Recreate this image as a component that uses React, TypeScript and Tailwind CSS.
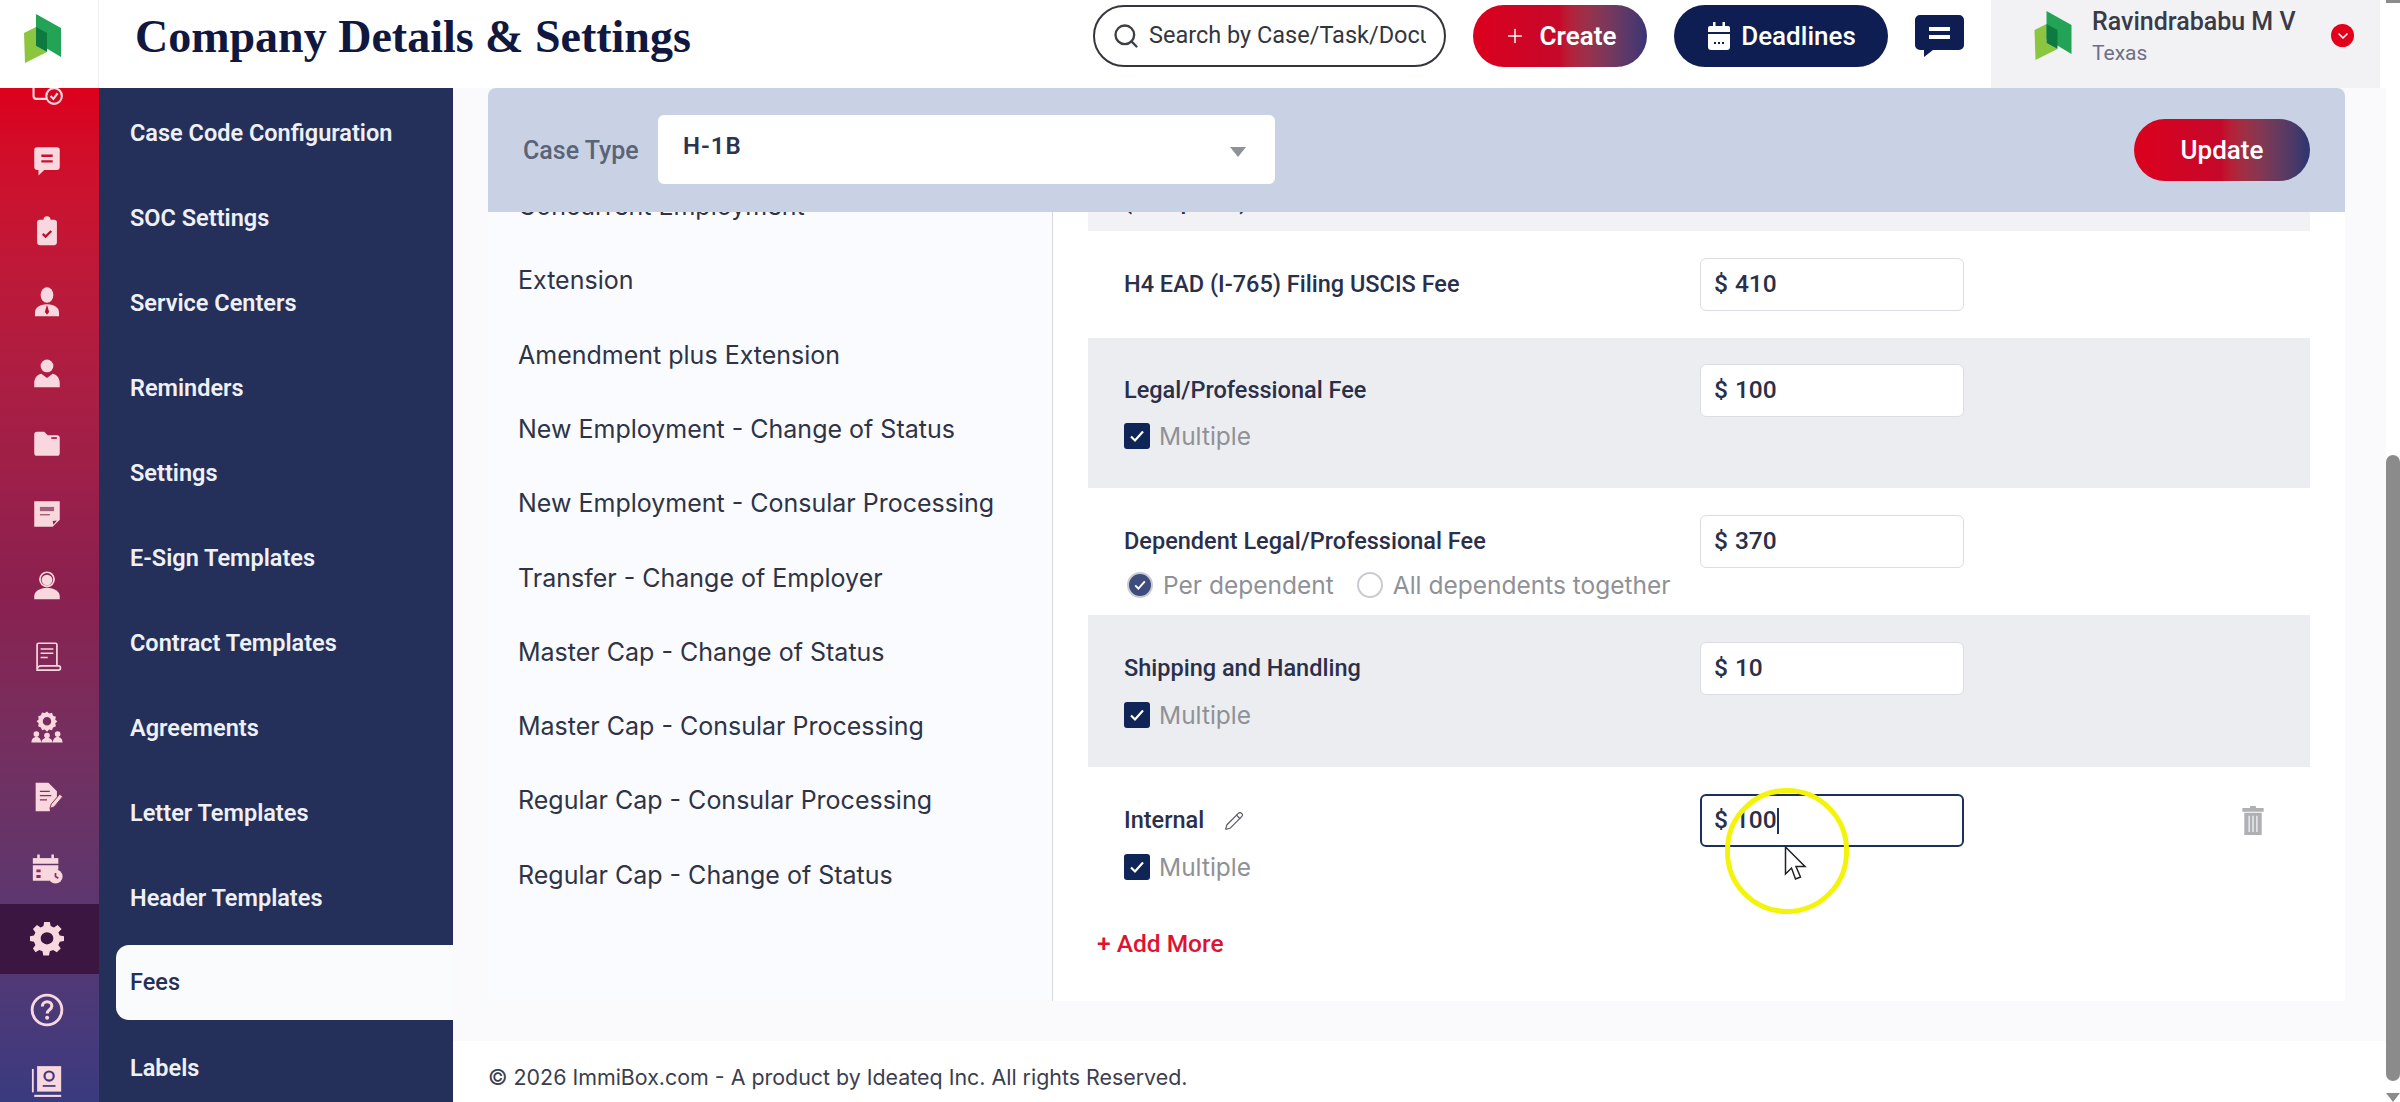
import React from "react";
import { Search, Plus, Pencil, ChevronDown } from "lucide-react";

const LogoMark = ({ className }: { className: string }) => (
  <svg viewBox="0 0 37 49" className={className}>
    <polygon points="0,19 12,13 12,32 23,38 1,49" fill="#8cc63f" />
    <polygon points="12,0 37,14 37,43 12,28" fill="#22a355" />
    <polygon points="12,13 23,19 23,38 12,32" fill="#0f7a40" />
  </svg>
);

const c = "#f8d7de";
const I = ({ children }: { children: React.ReactNode }) => (
  <svg viewBox="0 0 24 24" className="w-[34px] h-[34px]" fill={c}>{children}</svg>
);
const railIcons: React.ReactNode[] = [
  <I><rect x="2.5" y="2" width="16" height="17" rx="2" fill="none" stroke={c} strokeWidth="1.5" /><circle cx="7" cy="6" r="1" /><circle cx="17" cy="17" r="5.5" fill="#d4051f" stroke={c} strokeWidth="1.5" /><path d="M14.5 17l2 2 3-4" fill="none" stroke={c} strokeWidth="1.5" /></I>,
  <I><path d="M5 3h14a2 2 0 0 1 2 2v12a2 2 0 0 1-2 2h-9l-4 4v-4H5a2 2 0 0 1-2-2V5a2 2 0 0 1 2-2z" /><path d="M8 9h8M8 13h8" stroke="#c8102e" strokeWidth="1.6" /></I>,
  <I><path d="M7 4h2.5a2.5 2.5 0 0 1 5 0H17a2 2 0 0 1 2 2v14a2 2 0 0 1-2 2H7a2 2 0 0 1-2-2V6a2 2 0 0 1 2-2z" /><path d="M9 14l2 2 4-4" fill="none" stroke="#b8102e" strokeWidth="1.6" /></I>,
  <I><ellipse cx="12" cy="7" rx="4.5" ry="5.5" /><path d="M3.5 22v-2.5c0-3.5 3-6 8.5-6s8.5 2.500 8.500 6V22z" /><path d="M12 14l-1.500 5 1.500 2 1.500-2z" fill="#b3122f" /></I>,
  <I><circle cx="12" cy="7" r="4.500" /><path d="M3 22v-3c0-4 3-6.500 5-6.500l4 3 4-3c2 0 5 2.500 5 6.500v3z" /></I>,
  <I><path d="M3 6a2 2 0 0 1 2-2h5l2.500 2.500H19a2 2 0 0 1 2 2V19a2 2 0 0 1-2 2H5a2 2 0 0 1-2-2z" /><path d="M15 8.500h4" stroke="#a81c40" strokeWidth="1.200" /></I>,
  <I><path d="M3 3h18v13l-5 5H3z" /><path d="M7 7h10v3H7z" fill="#a0607a" /><path d="M7 12.500h7" stroke="#a0607a" strokeWidth="1" /><path d="M16 17l3-.5-2.500 3z" fill="#9a1e48" /></I>,
  <I><circle cx="12" cy="8" r="5" fill="none" stroke={c} strokeWidth="1.200" /><circle cx="12" cy="8.500" r="3.800" /><path d="M3 22v-2c0-3.500 4-6 9-6s9 2.500 9 6v2z" /></I>,
  <I><path d="M5 21V4a1 1 0 0 1 1-1h12a1 1 0 0 1 1 1v15" fill="none" stroke={c} strokeWidth="1.200" /><path d="M7.500 7h9M7.500 10h9M7.500 13h5" stroke={c} strokeWidth="1" /><path d="M5 22h15a1.500 1.500 0 0 0 0-3H8c-2 0-3 1-3 3z" fill="none" stroke={c} strokeWidth="1.200" /></I>,
  <I><path fillRule="evenodd" d="M12 1l1.500 1.500 2-.5.8 2 2 .8-.5 2L19.300 8l-1.500 1.500.5 2-2 .8-.8 2-2-.5L12 15.300l-1.500-1.500-2 .5-.8-2-2-.8.5-2L4.700 8l1.500-1.500-.5-2 2-.8.8-2 2 .5zM12 5a3 3 0 1 0 0 6 3 3 0 0 0 0-6z" /><circle cx="4.500" cy="17" r="2" /><circle cx="12" cy="18" r="2" /><circle cx="19.500" cy="17" r="2" /><path d="M1 23c0-2.500 1.500-4 3.500-4s3 1 3.500 4zM8 23c.3-2.500 2-3.500 4-3.500s3.700 1 4 3.500zM16 23c.5-3 1.500-4 3.500-4s3.500 1.500 3.500 4z" /></I>,
  <I><path d="M4 2h9l6 6v6l-5 6v2H4z" /><path d="M7 8h7M7 11h8M7 14h5" stroke="#8e2a58" strokeWidth="1" /><path d="M14 20l1-3 6-7 2 1.800-6 7.200z" stroke="#8e2a58" strokeWidth=".7" /></I>,
  <I><path d="M2 5h18v4H2z" /><path d="M6 2.500v3M16 2.500v3" stroke={c} strokeWidth="1.800" /><path d="M2 10h18v3a7 7 0 0 0-6 8H2z" /><path d="M4.500 13h3v2h-3zM4.500 17h3v2h-3z" fill="#8a2d5c" /><circle cx="18" cy="18" r="5" /><path d="M18 15.500V18l2 1.200" fill="none" stroke="#8a2d5c" strokeWidth="1.200" /></I>,
  <I><path fillRule="evenodd" d="M10 1h4l.6 3 2.300 1 2.600-1.700 2.800 2.800L20 8.700l1 2.300 3 .6v3.400l-3 .6-1 2.300 1.700 2.600-2.800 2.800-2.600-1.700-2.300 1-.6 3h-4l-.6-3-2.300-1-2.600 1.700L2.100 20.500l1.700-2.600-1-2.300-3-.6v-3.400l3-.6 1-2.300L2.100 6.100l2.800-2.800L7.500 5l2-1zM12 8.500a4.500 4.500 0 1 0 0 9 4.500 4.500 0 0 0 0-9z" transform="translate(0 -1) scale(1 .96)" /></I>,
  <I><circle cx="12" cy="12" r="10.500" fill="none" stroke={c} strokeWidth="2" /><path d="M8.700 9.500c0-2 1.500-3.300 3.400-3.300s3.300 1.200 3.300 3c0 2.600-3.300 2.600-3.300 5.300" fill="none" stroke={c} strokeWidth="2.200" /><circle cx="12.100" cy="17.500" r="1.400" /></I>,
  <I><path d="M2 20V3.500" stroke={c} strokeWidth="1.300" /><path d="M5 1.500h17v18H5z" /><circle cx="13.500" cy="8.500" r="4" fill="#3f3878" /><circle cx="13.500" cy="8.500" r="2.500" /><path d="M9 15.500h9" stroke="#3f3878" strokeWidth="1.200" /><path d="M3 22.500h19" stroke={c} strokeWidth="1.500" /></I>,
];

const sideItems = ["Case Code Configuration", "SOC Settings", "Service Centers", "Reminders", "Settings", "E-Sign Templates", "Contract Templates", "Agreements", "Letter Templates", "Header Templates", "Fees", "Labels"];
const caseList = ["Extension", "Amendment plus Extension", "New Employment - Change of Status", "New Employment - Consular Processing", "Transfer - Change of Employer", "Master Cap - Change of Status", "Master Cap - Consular Processing", "Regular Cap - Consular Processing", "Regular Cap - Change of Status"];

const Checkbox = () => (
  <span className="w-[26px] h-[26px] rounded-[3px] bg-[#0f2557] flex items-center justify-center">
    <svg viewBox="0 0 20 20" className="w-[20px] h-[20px]"><path d="M4 10.500l4 4 8-9" fill="none" stroke="#fff" strokeWidth="2.200" /></svg>
  </span>
);
const Multiple = ({ mt }: { mt: string }) => (
  <div className={`flex items-center gap-[9px] h-[32px] ${mt}`}>
    <Checkbox />
    <span className="text-[24.500px] text-[#909196]">Multiple</span>
  </div>
);
const Amount = ({ v, focus }: { v: string; focus?: boolean }) => (
  <div className={`w-[264px] h-[53px] shrink-0 rounded-[6px] bg-white flex items-center text-[24.500px] font-medium text-[#2a2f4a] font-[Roboto,sans-serif] ${focus ? "border-2 border-[#1d2f5b] px-[12px]" : "border border-[#dcdde2] px-[13px]"}`}>
    <span>$</span>
    <span className="ml-[7px]">{v}</span>
    {focus && <span className="w-[2px] h-[26px] bg-[#1d2f5b]" />}
  </div>
);
const Row = ({ label, v, gray, children, h, focus, extra, pt }: { label: React.ReactNode; v: string; gray?: boolean; children?: React.ReactNode; h: string; focus?: boolean; extra?: React.ReactNode; pt: string }) => (
  <div className={`flex px-[36px] ${pt} ${h} ${gray ? "bg-[#ecedf0]" : ""}`}>
    <div className="w-[576px] shrink-0">
      <div className="h-[53px] flex items-center text-[23.500px] font-medium text-[#2a2f4a] font-[Roboto,sans-serif]">{label}</div>
      {children}
    </div>
    <Amount v={v} focus={focus} />
    {extra}
  </div>
);

export default function App() {
  return (
    <div className="w-[2400px] h-[1102px] flex overflow-hidden bg-white font-[Inter,sans-serif]">
      <div className="w-[2386px] flex flex-col">
        <header className="h-[88px] shrink-0 flex items-start bg-white">
          <div className="w-[99px] h-full border-r border-[#eeeeee] flex items-start justify-center pr-[14px] pt-[14px]">
            <LogoMark className="w-[37px] h-[49px]" />
          </div>
          <h1 className="ml-[36px] mt-[14px] text-[46px] leading-[46px] font-bold text-[#10183f] font-['Liberation_Serif',serif]">Company Details &amp; Settings</h1>
          <div className="ml-auto flex items-start gap-[27px] h-full">
            <div className="w-[353px] h-[62px] mt-[5px] rounded-full border-2 border-[#33363d] flex items-center pl-[17px] pr-[18px] gap-[9px]">
              <Search size={28} className="text-[#3d3f46] shrink-0" strokeWidth={2} />
              <div className="overflow-hidden whitespace-nowrap text-[23.500px] text-[#33363d] font-[Roboto,sans-serif]">Search by Case/Task/Document</div>
            </div>
            <div className="w-[174px] h-[62px] mt-[5px] rounded-full bg-linear-to-r from-[#dc001c] via-[#c5082a] to-[#3a3475] flex items-center justify-center gap-[14px] text-white text-[26px] font-semibold font-[Roboto,sans-serif]">
              <Plus size={22} strokeWidth={1.6} />
              <span>Create</span>
            </div>
            <div className="w-[214px] h-[62px] mt-[5px] rounded-full bg-[#0e1d52] flex items-center justify-center gap-[9px] text-white text-[26px] font-medium font-[Roboto,sans-serif]">
              <svg viewBox="0 0 24 30" className="w-[26px] h-[30px]"><path d="M6 1h2.500v4H15.500V1H18v4h3a2 2 0 0 1 2 2v4H1V7a2 2 0 0 1 2-2h3zM1 13h22v13a3 3 0 0 1-3 3H4a3 3 0 0 1-3-3z" fill="#fff" /><path d="M7 22h2M11 22h2M15 22h2" stroke="#0e1d52" strokeWidth="1.800" /></svg>
              <span>Deadlines</span>
            </div>
            <svg viewBox="0 0 49 42" className="w-[49px] h-[42px] mt-[15px]"><path d="M5 0h39a5 5 0 0 1 5 5v25a5 5 0 0 1-5 5H18l-9 7v-7H5a5 5 0 0 1-5-5V5a5 5 0 0 1 5-5z" fill="#0e1d52" /><path d="M14 12h21v4H14zM14 20h21v4H14z" fill="#fff" /></svg>
            <div className="w-[389px] h-full bg-[#f2f2f4] flex items-start pl-[42px] relative mr-[6px]">
              <LogoMark className="w-[40px] h-[49px] mr-[19px] mt-[11px]" />
              <div className="flex flex-col mt-[7px] font-[Roboto,sans-serif]">
                <span className="text-[25px] leading-[30px] font-medium text-[#3a3a48]">Ravindrababu M V</span>
                <span className="text-[21px] leading-[32px] text-[#6e6e88]">Texas</span>
              </div>
              <span className="absolute left-[340px] top-[24px] w-[23px] h-[23px] rounded-full bg-[#e3001b] flex items-center justify-center text-white"><ChevronDown size={16} strokeWidth={2.500} /></span>
            </div>
          </div>
        </header>

        <div className="flex flex-1 min-h-0">
          <nav className="w-[99px] shrink-0 bg-linear-to-b from-[#dc001c] via-[#8a2050] to-[#3a3a80] overflow-hidden flex flex-col items-stretch">
            {railIcons.map((ic, i) => (
              <div key={i} className={`h-[70.800px] shrink-0 flex items-center justify-center pr-[6px] ${i === 0 ? "-mt-[34px]" : ""} ${i === 12 ? "bg-[#3a1640]" : ""}`}>{ic}</div>
            ))}
          </nav>

          <aside className="w-[354px] shrink-0 bg-[#25305a] pt-[3px] overflow-hidden font-[Roboto,sans-serif] text-[23.500px]">
            {sideItems.map((s) => (
              s === "Fees"
                ? <div key={s} className="ml-[17px] h-[75px] mt-[4px] mb-[6px] flex items-center pl-[14px] bg-[#fafbfd] rounded-l-[13px] text-[#25305a] font-medium">{s}</div>
                : <div key={s} className="h-[85px] flex items-center pl-[31px] text-[#eef0f6] font-semibold">{s}</div>
            ))}
          </aside>

          <main className="flex-1 min-w-0 bg-[#fafafc] flex flex-col pl-[35px] pr-[41px]">
            <div className="h-[124px] shrink-0 bg-[#c9d2e4] rounded-t-[8px] flex items-center pl-[35px] pr-[35px] relative z-10">
              <span className="text-[25px] font-medium text-[#5a6478] font-[Roboto,sans-serif] w-[135px] mt-[2px]">Case Type</span>
              <div className="w-[617px] h-[69px] bg-white rounded-[6px] flex items-center pl-[25px] pr-[29px] -mt-[2px] text-[24px] font-semibold tracking-[1px] text-[#2c3350] font-[Roboto,sans-serif]">
                <span className="-mt-[6px]">H-1B</span>
                <span className="ml-auto w-0 h-0 border-x-[8px] border-x-transparent border-t-[10px] border-t-[#8f9297] mt-[6px]" />
              </div>
              <div className="ml-auto w-[176px] h-[62px] rounded-full bg-linear-to-r from-[#dc001c] via-[#c5082a] to-[#2a3570] flex items-center justify-center text-white text-[26px] font-medium font-[Roboto,sans-serif]">Update</div>
            </div>

            <div className="h-[789px] shrink-0 flex">
              <div className="w-[565px] shrink-0 bg-[#f9fbfe] border-r border-[#d8d9dd] pl-[30px] overflow-hidden text-[25px] text-[#2f3346]">
                <div className="h-[32px] -mt-[21px] flex items-center">Concurrent Employment</div>
                {caseList.map((t, i) => (
                  <div key={t} className={`h-[74.300px] flex items-center ${i === 0 ? "mt-[21px]" : ""}`}>{t}</div>
                ))}
              </div>
              <div className="flex-1 bg-white pl-[35px] pr-[35px] overflow-hidden">
                <div className="h-[19px] bg-[#f2f2f4] pl-[36px] overflow-hidden text-[23.500px] font-medium text-[#2a2f4a] font-[Roboto,sans-serif]">
                  <div className="h-[32px] -mt-[26px] flex items-center">(if required)</div>
                </div>
                <Row label="H4 EAD (I-765) Filing USCIS Fee" v="410" h="h-[107px]" pt="pt-[27px]" />
                <Row label="Legal/Professional Fee" v="100" gray h="h-[150px]" pt="pt-[26px]"><Multiple mt="mt-[3px]" /></Row>
                <Row label="Dependent Legal/Professional Fee" v="370" h="h-[127px]" pt="pt-[27px]">
                  <div className="flex items-center h-[32px] mt-[1px] text-[24.500px] text-[#909196] whitespace-nowrap">
                    <span className="w-[26px] h-[26px] ml-[3px] rounded-full bg-[#3f4d7c] border-2 border-[#c9cbd2] flex items-center justify-center">
                      <svg viewBox="0 0 20 20" className="w-[16px] h-[16px]"><path d="M4 10.500l4 4 8-9" fill="none" stroke="#fff" strokeWidth="2.400" /></svg>
                    </span>
                    <span className="ml-[10px]">Per dependent</span>
                    <span className="w-[26px] h-[26px] ml-[23px] rounded-full border-2 border-[#c9cbd2]" />
                    <span className="ml-[10px]">All dependents together</span>
                  </div>
                </Row>
                <Row label="Shipping and Handling" v="10" gray h="h-[152px]" pt="pt-[27px]"><Multiple mt="mt-[4px]" /></Row>
                <Row
                  label={<span className="flex items-center gap-[20px]">Internal <Pencil size={20} strokeWidth={1.400} className="text-[#55575f]" /></span>}
                  v="100"
                  focus
                  h="h-[154px]"
                  pt="pt-[27px]"
                  extra={
                    <svg viewBox="0 0 22 30" className="w-[22px] h-[29px] ml-[278px] mt-[12px]"><path d="M8 0h6v2h8v4H0V2h8z M2 7h18v23H2z" fill="#aeb0b4" /><path d="M7 10v17M11 10v17M15 10v17" stroke="#f5f5f6" strokeWidth="1.300" /></svg>
                  }
                ><Multiple mt="mt-[4px]" /></Row>
                <div className="h-[46px] flex items-center pl-[9px] text-[24.500px] font-medium text-[#e0132f] font-[Roboto,sans-serif]">+ Add More</div>
              </div>
            </div>

            <div className="flex-1 -ml-[35px] -mr-[41px] relative">
              <div className="h-[40px] bg-[#fafafc]" />
              <div className="h-[61px] bg-white pl-[35px] pt-[20px] text-[21.400px] text-[#3a3e4e]">© 2026 ImmiBox.com - A product by Ideateq Inc. All rights Reserved.</div>
            </div>
          </main>
        </div>
      </div>

      <div className="w-[14px] relative bg-white">
        <div className="absolute left-0 right-0 top-[455px] h-[626px] bg-[#8b8b8b] rounded-t-[7px] rounded-b-[7px]" />
        <div className="absolute left-0 top-0 w-[14px] h-[3px] bg-[#8b8b8b]" />
        <div className="absolute left-0 bottom-0 w-0 h-0 border-x-[7px] border-x-transparent border-t-[9px] border-t-[#8b8b8b]" />
      </div>

      <div className="absolute left-[1725px] top-[788px] w-[124px] h-[126px] rounded-full border-[5px] border-[#f4f40a] pointer-events-none" />
      <svg viewBox="0 0 24 36" className="absolute left-[1784px] top-[846px] w-[24px] h-[36px] pointer-events-none">
        <path d="M1.500 1v27l6-6 4 11 5-2-4.500-10.500h9z" fill="#fff" stroke="#222" strokeWidth="1.500" />
      </svg>
    </div>
  );
}
